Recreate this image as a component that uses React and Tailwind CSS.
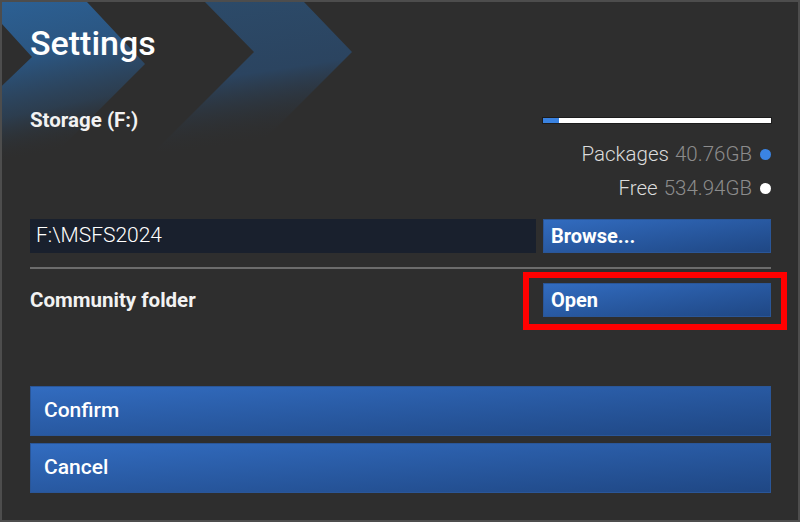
import React from 'react';

// background chevrons drawn behind the title
const Chevrons = () => (
  <svg className="absolute left-0 top-0 pointer-events-none" width="420" height="170" viewBox="0 0 420 170">
    <defs>
      <linearGradient id="chev1" x1="0" y1="0" x2="0.3" y2="1">
        <stop offset="0" stopColor="#2c6399" />
        <stop offset="0.45" stopColor="#2b5580" />
        <stop offset="0.75" stopColor="#2c4157" stopOpacity="0.8" />
        <stop offset="1" stopColor="#2e2e2e" stopOpacity="0" />
      </linearGradient>
      <linearGradient id="chev2" x1="0" y1="0" x2="0.2" y2="1">
        <stop offset="0" stopColor="#2c4b6a" />
        <stop offset="0.55" stopColor="#2b4460" />
        <stop offset="1" stopColor="#2e2e2e" stopOpacity="0" />
      </linearGradient>
    </defs>
    <polygon points="-20,0 85,0 143,62 40,165 -85,165 30,55" fill="url(#chev1)" />
    <polygon points="203,0 302,0 350,50 250,150 152,150 252,50" fill="url(#chev2)" />
  </svg>
);

const BlueButton = ({ children, className = '' }) => (
  <button
    className={`flex items-center bg-linear-to-br from-[#326cc0] to-[#1f4784] border border-[#2a5698] text-white text-left ${className}`}
  >
    {children}
  </button>
);

export default function App() {
  return (
    <div
      className="relative w-[800px] h-[522px] overflow-hidden bg-[#2e2e2e] border-2 border-[#4d4d4d]"
      style={{ fontFamily: 'Roboto, "Noto Sans", sans-serif' }}
    >
      <Chevrons />

      <div className="relative flex flex-col pl-[28px] pr-[27px] pt-[21px]">
        <h1 className="h-[40px] leading-[40px] text-[34px] font-medium text-white">Settings</h1>

        {/* storage */}
        <div className="mt-[45px] flex items-center justify-between h-[24px]">
          <span className="text-[20.5px] leading-[24px] font-bold text-[#f2f2f2]">Storage (F:)</span>
          <div className="w-[228px] h-[5px] bg-white flex ring-1 ring-[#1c1c1c]">
            <div className="w-[16px] h-full bg-[#3a82e0]" />
          </div>
        </div>

        <div className="mt-[10px] flex items-center justify-end h-[24px] text-[20.5px] leading-[24px] font-light">
          <span className="text-[#dcdcdc]">Packages</span>
          <span className="ml-[6px] text-[#8c8c8c]">40.76GB</span>
          <span className="ml-[8px] w-[11px] h-[11px] rounded-full bg-[#3a84e4]" />
        </div>

        <div className="mt-[10px] flex items-center justify-end h-[24px] text-[20.5px] leading-[24px] font-light">
          <span className="text-[#dcdcdc]">Free</span>
          <span className="ml-[6px] text-[#8c8c8c]">534.94GB</span>
          <span className="ml-[8px] w-[11px] h-[11px] rounded-full bg-white" />
        </div>

        {/* path */}
        <div className="mt-[19px] flex gap-[7px] h-[34px]">
          <div className="flex-1 flex items-center bg-[#19202d] px-[6px] text-[21px] font-light text-white">
            F:\MSFS2024
          </div>
          <BlueButton className="w-[228px] h-full px-[7px] text-[20px] font-bold">Browse...</BlueButton>
        </div>

        <div className="mt-[14px] h-[2px] bg-[#6c6c6c]" />

        {/* community folder */}
        <div className="mt-[14px] flex items-center justify-between h-[34px]">
          <span className="text-[20.5px] font-bold text-[#f2f2f2]">Community folder</span>
          <div className="relative w-[228px] h-full">
            <BlueButton className="w-full h-full px-[7px] text-[20px] font-bold">Open</BlueButton>
            <div className="absolute -left-[20px] -top-[11px] w-[264px] h-[58px] border-[6px] border-[#ff0000]" />
          </div>
        </div>

        {/* actions */}
        <div className="mt-[69px] flex flex-col gap-[7px]">
          <BlueButton className="h-[50px] px-[13px] text-[21px] font-medium">Confirm</BlueButton>
          <BlueButton className="h-[50px] px-[13px] text-[21px] font-medium">Cancel</BlueButton>
        </div>
      </div>
    </div>
  );
}
